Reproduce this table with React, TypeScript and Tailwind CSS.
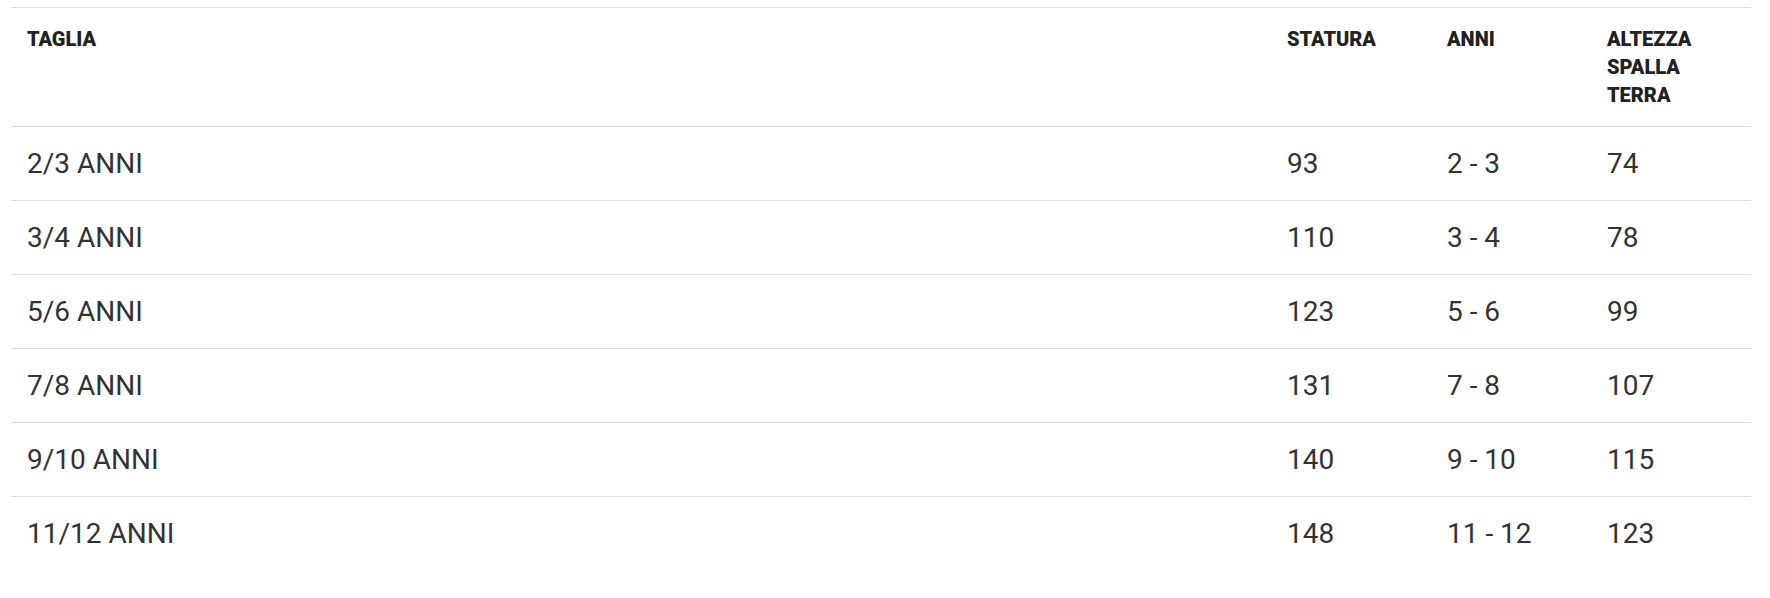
const rows = [
  ["2/3 ANNI", "93", "2 - 3", "74"],
  ["3/4 ANNI", "110", "3 - 4", "78"],
  ["5/6 ANNI", "123", "5 - 6", "99"],
  ["7/8 ANNI", "131", "7 - 8", "107"],
  ["9/10 ANNI", "140", "9 - 10", "115"],
  ["11/12 ANNI", "148", "11 - 12", "123"],
];

export default function App() {
  return (
    <div className="min-h-screen bg-white px-[11px] pt-[7px] font-['Roboto',sans-serif] text-[#333]">
      <table className="w-[1740px] table-fixed border-collapse text-left">
        <colgroup>
          <col className="w-[1260px]" />
          <col className="w-[160px]" />
          <col className="w-[160px]" />
          <col className="w-[160px]" />
        </colgroup>
        <thead>
          <tr className="border-t border-b border-[#dddddd]">
            {["TAGLIA", "STATURA", "ANNI", "ALTEZZA SPALLA TERRA"].map((h) => (
              <th
                key={h}
                className="px-4 pt-[17px] pb-[17px] align-top text-[20px] leading-[28px] font-black text-[#222]"
              >
                {h}
              </th>
            ))}
          </tr>
        </thead>
        <tbody>
          {rows.map((r, i) => (
            <tr key={r[0]} className={i < rows.length - 1 ? "border-b border-[#dddddd]" : ""}>
              {r.map((c, j) => (
                <td key={j} className="px-4 py-[18px] align-middle text-[28px] leading-[37px] font-normal">
                  {c}
                </td>
              ))}
            </tr>
          ))}
        </tbody>
      </table>
    </div>
  );
}
